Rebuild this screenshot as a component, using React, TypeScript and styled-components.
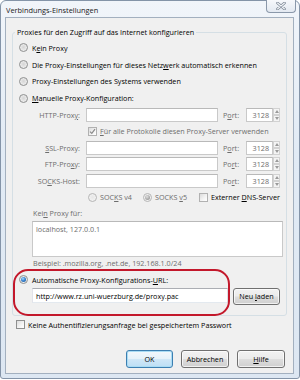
import React from 'react';
import styled, { createGlobalStyle } from 'styled-components';

const Global = createGlobalStyle`
  html, body { margin: 0; padding: 0; background: #ffffff; }
  body {
    width: 300px; height: 380px; overflow: hidden;
    font-family: 'Open Sans', 'Noto Sans', sans-serif;
    font-size: 7.2px; line-height: 10px; color: #000;
  }
  * { box-sizing: border-box; }
`;

const Window = styled.div`
  position: relative;
  width: 300px;
  height: 379px;
  display: flex;
  flex-direction: column;
  border: 1px solid #8494a8;
  border-radius: 6px 6px 3px 3px;
  background: linear-gradient(180deg, #f1f5fa 0%, #e2ebf5 40%, #dde7f2 100%);
`;

const TitleBar = styled.div`
  height: 16px;
  display: flex;
  justify-content: space-between;
  align-items: flex-start;
  flex-shrink: 0;
`;

const Title = styled.div`
  padding: 4px 0 0 5px;
  line-height: 11px;
  font-size: 7.4px;
  color: #1b1b1b;
`;

const CloseButton = styled.div`
  width: 30px;
  height: 13px;
  margin: -1px 3px 0 0;
  border: 1px solid #8a98aa;
  border-top: none;
  border-radius: 0 0 4px 4px;
  background: linear-gradient(180deg, #f6f8fb, #e3e9f1);
  display: flex;
  align-items: center;
  justify-content: center;
`;

const Client = styled.div`
  flex: 1;
  margin: 0 5px 4px 4px;
  background: #f0f0f0;
  border: 1px solid #a3b0bf;
  padding: 9px 6px 5px 6px;
  display: flex;
  flex-direction: column;
`;

const GroupBox = styled.fieldset`
  margin: 0;
  width: 275px;
  border: 1px solid #d5dfe5;
  border-radius: 3px;
  padding: 2.65px 3px 10px 6px;
  min-width: 0;
`;

const Legend = styled.legend`
  margin-left: -4px;
  padding: 0 2px;
  line-height: 10px;
`;

const OptionRow = styled.div<{ $indent?: number }>`
  display: flex;
  align-items: center;
  height: 16.7px;
  gap: 4px;
  padding-left: ${p => p.$indent ?? 0}px;
`;

const Radio = styled.span<{ $checked?: boolean; $disabled?: boolean }>`
  width: 9px;
  height: 9px;
  border-radius: 50%;
  border: 1px solid ${p => (p.$disabled ? '#b5b5b5' : '#8e8f8f')};
  background: ${p =>
    p.$disabled
      ? 'radial-gradient(circle at 50% 45%, #e6e6e6 0%, #efefef 55%, #fafafa 100%)'
      : 'radial-gradient(circle at 50% 45%, #d4d4d4 0%, #e8e8e8 55%, #f8f8f8 100%)'};
  display: flex;
  align-items: center;
  justify-content: center;
  flex-shrink: 0;
  &::after {
    content: '';
    width: 5px;
    height: 5px;
    border-radius: 50%;
    background: ${p =>
      !p.$checked
        ? 'transparent'
        : p.$disabled
        ? 'radial-gradient(circle at 40% 35%, #e0e0e0 0%, #a8a8a8 60%, #8c8c8c 100%)'
        : 'radial-gradient(circle at 40% 35%, #a6dcff 0%, #3b86d4 45%, #134f91 100%)'};
  }
`;

const CheckBox = styled.span<{ $disabled?: boolean }>`
  width: 9px;
  height: 9px;
  border: 1px solid ${p => (p.$disabled ? '#b1b1b1' : '#8e8f8f')};
  background: linear-gradient(135deg, #dcdcdc 0%, #f4f4f4 60%, #ffffff 100%);
  display: flex;
  align-items: center;
  justify-content: center;
  flex-shrink: 0;
`;

const Text = styled.span<{ $disabled?: boolean }>`
  color: ${p => (p.$disabled ? '#6d6d6d' : '#000')};
  white-space: nowrap;
`;

const Mn = styled.span`
  text-decoration: underline;
  text-underline-offset: 1px;
`;

const ProxyRow = styled.div`
  display: flex;
  align-items: center;
  height: 16.5px;
`;

const FieldLabel = styled.span`
  width: 61px;
  text-align: right;
  color: #6d6d6d;
  white-space: nowrap;
  flex-shrink: 0;
`;

const TextBox = styled.div<{ $width: number; $height?: number; $align?: string }>`
  width: ${p => p.$width}px;
  height: ${p => p.$height ?? 14}px;
  flex-shrink: 0;
  background: #ffffff;
  border: 1px solid #c9c9c9;
  border-top-color: #b9b9b9;
  color: #6d6d6d;
  padding: 1px 3px;
  line-height: 11px;
  text-align: ${p => p.$align ?? 'left'};
  white-space: nowrap;
  overflow: hidden;
`;

const HostBox = styled(TextBox)`
  margin-left: 6px;
`;

const PortLabel = styled.span`
  width: 23px;
  margin-left: 5px;
  color: #6d6d6d;
  flex-shrink: 0;
`;

const Spinner = styled.div`
  width: 7px;
  height: 14px;
  display: flex;
  flex-direction: column;
  flex-shrink: 0;
`;

const SpinHalf = styled.div`
  flex: 1;
  border: 1px solid #d2d2d2;
  background: #f4f4f4;
  display: flex;
  align-items: center;
  justify-content: center;
`;

const InlineItem = styled.div<{ $width?: number }>`
  display: flex;
  align-items: center;
  gap: 3px;
  width: ${p => (p.$width ? `${p.$width}px` : 'auto')};
  flex-shrink: 0;
`;

const SubRow = styled.div`
  display: flex;
  align-items: center;
  height: 16.5px;
  padding-left: 69px;
`;

const NoProxyLabel = styled.div`
  margin: 2.25px 0 0 14px;
  color: #6d6d6d;
`;

const NoProxyArea = styled.div`
  margin: 3px 0 0 13px;
  width: 251px;
  height: 36px;
  background: #ffffff;
  border: 1px solid #c9c9c9;
  border-top-color: #b9b9b9;
  padding: 2px 3px;
  color: #6d6d6d;
`;

const Hint = styled.div`
  margin: 1px 0 0 14px;
  color: #6d6d6d;
  white-space: nowrap;
`;

const AutoRow = styled(OptionRow)`
  margin-top: 4px;
  height: 16px;
`;

const UrlRow = styled.div`
  display: flex;
  align-items: flex-start;
  gap: 5px;
  padding-left: 13px;
`;

const UrlBox = styled.div`
  width: 196px;
  height: 15px;
  background: #ffffff;
  border: 1px solid #abadb3;
  border-left-color: #e2e3ea;
  border-right-color: #dbdfe6;
  border-bottom-color: #e3e9ef;
  padding: 2px 3px;
  line-height: 10px;
  white-space: nowrap;
  overflow: hidden;
`;

const Button = styled.div<{ $default?: boolean; $width?: number }>`
  width: ${p => p.$width ?? 47}px;
  height: 18px;
  flex-shrink: 0;
  border: 1px solid ${p => (p.$default ? '#3c7fb1' : '#707070')};
  border-radius: 3px;
  background: ${p =>
    p.$default
      ? 'linear-gradient(180deg, #f2f8fc 0%, #e5f2fa 48%, #cfe7f7 52%, #bddff5 100%)'
      : 'linear-gradient(180deg, #f2f2f2 0%, #ebebeb 48%, #dddddd 52%, #cfcfcf 100%)'};
  box-shadow: inset 0 0 0 1px ${p => (p.$default ? '#a9dcf4' : 'rgba(255,255,255,0.7)')};
  display: flex;
  align-items: center;
  justify-content: center;
  white-space: nowrap;
`;

const ReloadButton = styled(Button)`
  height: 17px;
`;

const AuthRow = styled.div`
  display: flex;
  align-items: center;
  gap: 3px;
  height: 10px;
  margin-top: 4px;
  padding-left: 4px;
`;

const ButtonRow = styled.div`
  margin-top: auto;
  display: flex;
  justify-content: flex-end;
  gap: 8px;
  padding-right: 2px;
`;

const Highlight = styled.div`
  position: absolute;
  left: 12px;
  top: 268px;
  width: 217px;
  height: 47px;
  border: 2px solid #c3182b;
  border-radius: 15px;
  pointer-events: none;
`;

const CheckMark = () => (
  <svg width="7" height="7" viewBox="0 0 7 7">
    <path d="M1 3.6 L2.8 5.4 L6 1.2" fill="none" stroke="#8a8a8a" strokeWidth="1.2" />
  </svg>
);

const CloseGlyph = () => (
  <svg width="10" height="8" viewBox="0 0 10 8">
    <path d="M1.5 1 L8.5 7 M8.5 1 L1.5 7" stroke="#7a8594" strokeWidth="2.6" strokeLinecap="round" />
    <path d="M1.5 1 L8.5 7 M8.5 1 L1.5 7" stroke="#f4f6f9" strokeWidth="1.1" strokeLinecap="round" />
  </svg>
);

const Arrow = ({ up }: { up?: boolean }) => (
  <svg width="4" height="3" viewBox="0 0 4 3">
    <path d={up ? 'M0 3 L2 0 L4 3 Z' : 'M0 0 L4 0 L2 3 Z'} fill="#9a9a9a" />
  </svg>
);

const PortField = () => (
  <>
    <TextBox $width={27} $align="right">3128</TextBox>
    <Spinner>
      <SpinHalf><Arrow up /></SpinHalf>
      <SpinHalf><Arrow /></SpinHalf>
    </Spinner>
  </>
);

type ProxyDef = { label: React.ReactNode; port: React.ReactNode };

const proxies: ProxyDef[] = [
  { label: <>HTTP-Prox<Mn>y</Mn>:</>, port: <>P<Mn>o</Mn>rt:</> },
];
const otherProxies: ProxyDef[] = [
  { label: <><Mn>S</Mn>SL-Proxy:</>, port: <>P<Mn>o</Mn>rt:</> },
  { label: <>FTP-Pro<Mn>x</Mn>y:</>, port: <>Po<Mn>r</Mn>t:</> },
  { label: <>SO<Mn>C</Mn>KS-Host:</>, port: <>Po<Mn>r</Mn>t:</> },
];

const ProxyLine = ({ def }: { def: ProxyDef }) => (
  <ProxyRow>
    <FieldLabel>{def.label}</FieldLabel>
    <HostBox $width={132} />
    <PortLabel>{def.port}</PortLabel>
    <PortField />
  </ProxyRow>
);

export default function App() {
  return (
    <>
      <Global />
      <Window>
        <TitleBar>
          <Title>Verbindungs-Einstellungen</Title>
          <CloseButton><CloseGlyph /></CloseButton>
        </TitleBar>
        <Client>
          <GroupBox>
            <Legend>Proxies für den Zugriff auf das Internet konfigurieren</Legend>
            <OptionRow>
              <Radio />
              <Text>K<Mn>e</Mn>in Proxy</Text>
            </OptionRow>
            <OptionRow>
              <Radio />
              <Text>Die Proxy-Einstellungen für dieses Netz<Mn>w</Mn>erk automatisch erkennen</Text>
            </OptionRow>
            <OptionRow>
              <Radio />
              <Text>Proxy-Einstellungen des Systems verwenden</Text>
            </OptionRow>
            <OptionRow>
              <Radio />
              <Text><Mn>M</Mn>anuelle Proxy-Konfiguration:</Text>
            </OptionRow>
            {proxies.map((d, i) => <ProxyLine key={i} def={d} />)}
            <SubRow>
              <InlineItem>
                <CheckBox $disabled><CheckMark /></CheckBox>
                <Text $disabled><Mn>F</Mn>ür alle Protokolle diesen Proxy-Server verwenden</Text>
              </InlineItem>
            </SubRow>
            {otherProxies.map((d, i) => <ProxyLine key={i} def={d} />)}
            <SubRow>
              <InlineItem $width={55}>
                <Radio $disabled />
                <Text $disabled>SOC<Mn>K</Mn>S v4</Text>
              </InlineItem>
              <InlineItem $width={56}>
                <Radio $checked $disabled />
                <Text $disabled>SOCKS <Mn>v</Mn>5</Text>
              </InlineItem>
              <InlineItem>
                <CheckBox $disabled />
                <Text>Externer <Mn>D</Mn>NS-Server</Text>
              </InlineItem>
            </SubRow>
            <NoProxyLabel>Kei<Mn>n</Mn> Proxy für:</NoProxyLabel>
            <NoProxyArea>localhost, 127.0.0.1</NoProxyArea>
            <Hint>Beispiel: .mozilla.org, .net.de, 192.168.1.0/24</Hint>
            <AutoRow>
              <Radio $checked />
              <Text>Automatische Proxy-Konfigurations-<Mn>U</Mn>RL:</Text>
            </AutoRow>
            <UrlRow>
              <UrlBox>http://www.rz.uni-wuerzburg.de/proxy.pac</UrlBox>
              <ReloadButton><Text>Neu <Mn>l</Mn>aden</Text></ReloadButton>
            </UrlRow>
          </GroupBox>
          <AuthRow>
            <CheckBox />
            <Text>Keine Authentifizierungsanfrage bei gespeichertem Passwort</Text>
          </AuthRow>
          <ButtonRow>
            <Button $default>OK</Button>
            <Button $width={48}>Abbrechen</Button>
            <Button $width={48}><Text><Mn>H</Mn>ilfe</Text></Button>
          </ButtonRow>
        </Client>
        <Highlight />
      </Window>
    </>
  );
}
